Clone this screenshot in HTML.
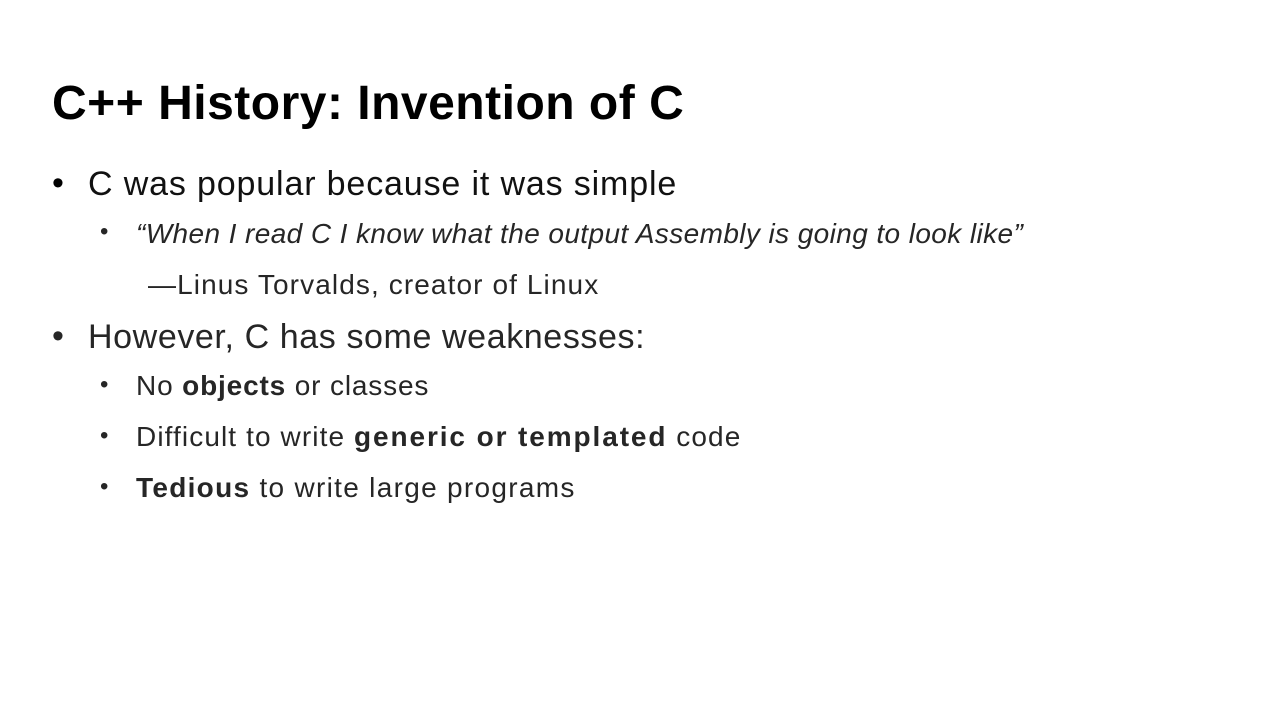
<!DOCTYPE html>
<html><head><meta charset="utf-8"><style>
body{margin:0;width:1280px;height:720px;background:#fff;overflow:hidden;font-family:"Liberation Sans",sans-serif;}
.l{position:absolute;white-space:nowrap;line-height:1;}
.t{left:52px;top:80px;font-size:48px;font-weight:bold;color:#000;letter-spacing:0.5px}
.b1{font-size:34px;color:#111}
.b2{font-size:28px;color:#262626;letter-spacing:1.1px}
.dot{position:absolute;white-space:nowrap;line-height:1}
</style></head><body>
<div class="l t">C++ History: Invention of C</div>
<div class="dot" style="left:52px;top:166px;font-size:34px">•</div>
<div class="l b1" style="left:88px;top:167px;letter-spacing:0.85px">C was popular because it was simple</div>
<div class="dot" style="left:100px;top:220px;font-size:24px;color:#262626">•</div>
<div class="l b2" style="left:136px;top:220px;font-style:italic;letter-spacing:0.4px">“When I read C I know what the output Assembly is going to look like”</div>
<div class="l b2" style="left:148px;top:271px">—Linus Torvalds, creator of Linux</div>
<div class="dot" style="left:52px;top:319px;font-size:34px;color:#262626">•</div>
<div class="l b1" style="left:88px;top:320px;color:#262626;letter-spacing:0.6px">However, C has some weaknesses:</div>
<div class="dot" style="left:100px;top:373px;font-size:24px;color:#262626">•</div>
<div class="l b2" style="left:136px;top:372px;letter-spacing:0.85px">No <b>objects</b> or classes</div>
<div class="dot" style="left:100px;top:424px;font-size:24px;color:#262626">•</div>
<div class="l b2" style="left:136px;top:423px">Difficult to write <b style="letter-spacing:1.9px">generic or templated</b> code</div>
<div class="dot" style="left:100px;top:475px;font-size:24px;color:#262626">•</div>
<div class="l b2" style="left:136px;top:474px;letter-spacing:1.3px"><b>Tedious</b> to write large programs</div>
</body></html>
